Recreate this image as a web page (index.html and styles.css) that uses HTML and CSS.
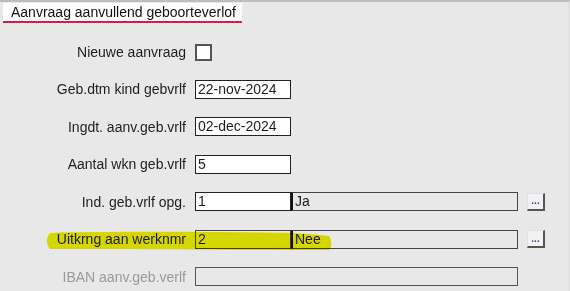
FILE: index.html
```html
<!DOCTYPE html>
<html lang="nl">
<head>
  <meta charset="UTF-8">
  <title>Aanvraag aanvullend geboorteverlof</title>
  <link rel="stylesheet" href="styles.css">
</head>
<body>

  <div class="page">
    <div class="tabbar">
      <div class="tab">Aanvraag aanvullend geboorteverlof</div>
    </div>

    <div class="form">
      <label class="lbl">Nieuwe aanvraag</label>
      <div class="field"><span class="check"></span></div>

      <label class="lbl">Geb.dtm kind gebvrlf</label>
      <div class="field"><div class="box">22-nov-2024</div></div>

      <label class="lbl">Ingdt. aanv.geb.vrlf</label>
      <div class="field"><div class="box">02-dec-2024</div></div>

      <label class="lbl">Aantal wkn geb.vrlf</label>
      <div class="field"><div class="box">5</div></div>

      <label class="lbl">Ind. geb.vrlf opg.</label>
      <div class="field">
        <div class="box">1</div>
        <div class="box desc">Ja</div>
        <button class="more">...</button>
      </div>

      <label class="lbl">Uitkrng aan werknmr</label>
      <div class="field">
        <div class="box ro">2</div>
        <div class="box desc">Nee</div>
        <button class="more">...</button>
      </div>

      <label class="lbl off">IBAN aanv.geb.verlf</label>
      <div class="field"><div class="box wide off"></div></div>
    </div>

    <!-- marker highlight -->
    <svg class="marker" width="570" height="291" viewBox="0 0 570 291">
      <path d="M50 233 C 120 231, 220 232, 292 233 C 310 234, 322 235, 329 236 C 332 240, 332 247, 329 250 C 250 250, 140 249, 50 249 C 46 245, 46 237, 50 233 Z" fill="#eaea00"/>
    </svg>
  </div>

</body>
</html>
```

FILE: styles.css
```css
* {
  margin: 0;
  padding: 0;
  box-sizing: border-box;
}

body {
  background: #e8e8e8;
  font-family: 'Liberation Sans', Arial, sans-serif;
  font-size: 14px;
  color: #1e1e1e;
  width: 570px;
  height: 291px;
  overflow: hidden;
}

.page {
  position: relative;
  height: 291px;
  border-top: 2px solid #bdbdbd;
  border-right: 1px solid #dadada;
}

.tabbar {
  padding: 1px 0 0 3px;
}

.tab {
  display: inline-block;
  width: 239px;
  height: 20px;
  background: #fff;
  border-bottom: 2px solid #e0184a;
  padding: 1px 0 0 8px;
  line-height: 16px;
  color: #111;
  white-space: nowrap;
}

.form {
  display: grid;
  grid-template-columns: 186px auto;
  column-gap: 9px;
  grid-auto-rows: 37.5px;
  align-items: center;
  padding-top: 10px;
}

.lbl {
  text-align: right;
  white-space: nowrap;
}

.lbl.off {
  color: #9a9a9a;
}

.field {
  display: flex;
  align-items: center;
}

.check {
  display: block;
  width: 17px;
  height: 17px;
  background: #fff;
  border: 2px solid #555;
  margin-top: 1px;
}

.box {
  width: 96px;
  height: 19px;
  background: #fff;
  border: 1px solid #222;
  padding-left: 2px;
  line-height: 17px;
  white-space: nowrap;
}

.box.ro {
  background: #e8e8e8;
  border-color: #444;
}

.box.desc {
  width: 227px;
  background: #e8e8e8;
  border-color: #444;
  border-left: 2px solid #111;
}

.box.wide {
  width: 323px;
}

.box.off {
  background: #e8e8e8;
  border-color: #555;
}

.more {
  width: 18px;
  height: 18px;
  margin-left: 9px;
  background: #f2f2f2;
  border: 1px solid #e0e0e0;
  border-right: 2px solid #555;
  border-bottom: 2px solid #555;
  font-family: 'Liberation Sans', Arial, sans-serif;
  font-size: 10px;
  font-weight: bold;
  color: #6a3a8a;
  line-height: 8px;
  padding: 0;
  cursor: pointer;
}

.marker {
  position: absolute;
  left: 0;
  top: -2px;
  mix-blend-mode: multiply;
  pointer-events: none;
}
```
